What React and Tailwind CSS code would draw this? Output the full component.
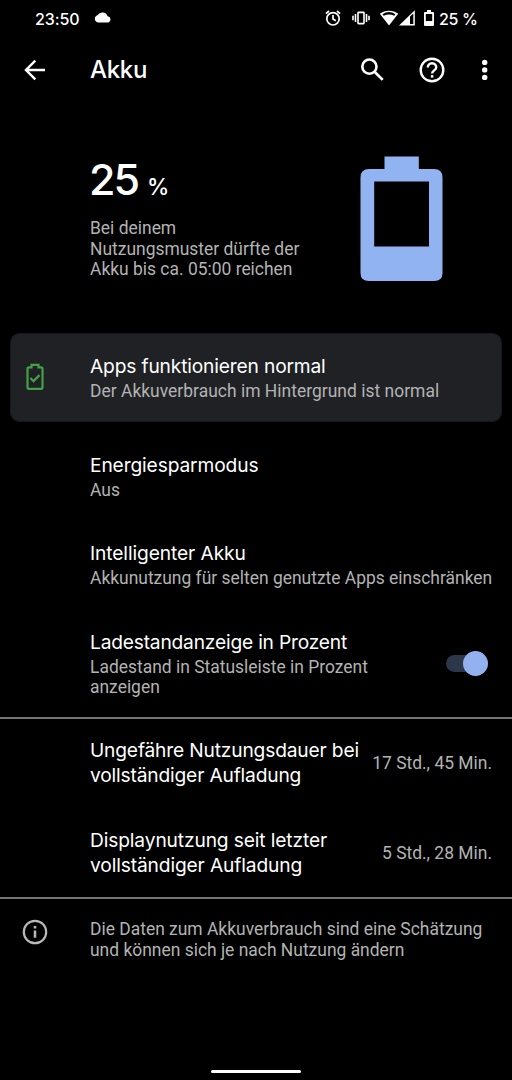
import React from "react";

const titleText = "font-['Inter',sans-serif] text-[19.2px] leading-[25px] text-white whitespace-nowrap";
const detailText = "text-[17.45px] leading-[20.5px] text-[#b3b3b3] whitespace-nowrap";

function StatusBar() {
  return (
    <header className="flex h-[37px] items-center pl-[35px] pr-[34px] font-['Inter',sans-serif] text-[16px] font-medium">
      <span className="w-[59px] whitespace-nowrap tracking-[-0.1px]">23:50</span>
      <svg className="mb-[2px] h-[11px] w-[18px]" viewBox="0 0 18 11" fill="currentColor">
        <path d="M4 10.4A3.7 3.7 0 0 1 3.5 3.2A5.6 5.6 0 0 1 13.6 4.2A3.2 3.2 0 0 1 14.4 10.4Z" />
      </svg>
      <div className="ml-auto flex items-center">
        <svg className="mb-px mr-[11px] h-4 w-4" viewBox="0 0 16 16" fill="none" stroke="currentColor" strokeWidth="1.7">
          <circle cx="8" cy="8.8" r="6.2" />
          <path d="M8 5v4l2.8 1.8M.9 3.7 4 1M15.1 3.7 12 1" />
        </svg>
        <svg className="mb-px mr-[9px] h-4 w-[18px]" viewBox="0 0 18 16" fill="none" stroke="currentColor" strokeWidth="1.6">
          <rect x="6" y="2.4" width="6" height="11.2" rx=".6" />
          <path d="M3.5 4v8M1 5.8v4.4M14.5 4v8M17 5.8v4.4" />
        </svg>
        <svg className="mb-px h-4 w-5" viewBox="0 0 20 16" fill="currentColor">
          <path d="M10 15.5.8 3.8C6-.3 14-.3 19.2 3.8Z" />
          <path d="M3.5 4.3Q10-.1 16.5 4.3L15.300 5.800Q10 3 4.700 5.800Z" fill="black" />
        </svg>
        <svg className="mb-px mr-[9px] h-4 w-4" viewBox="0 0 16 16">
          <path d="M0 15.5 15.8.2V15.5Z" fill="currentColor" />
          <path d="M11 6.600 14.300 3.400V14H11Z" fill="black" />
        </svg>
        <svg className="mb-px mr-[5px] h-4 w-[10px]" viewBox="0 0 10 16" fill="currentColor">
          <path fillRule="evenodd" d="M3 0h4v2h2q1 0 1 1v12q0 1-1 1H1q-1 0-1-1V3q0-1 1-1h2ZM1.8 4v7h6.4V4Z" />
        </svg>
        <span className="w-[39px] whitespace-nowrap tracking-[-0.3px]">25 %</span>
      </div>
    </header>
  );
}

function AppBar() {
  return (
    <div className="flex h-[66px] items-center pl-[23px] pr-[17px]">
      <svg className="h-6 w-6" viewBox="0 0 24 24" fill="none" stroke="currentColor" strokeWidth="2.4">
        <path d="M22 12H3.5M12.3 2.7 3 12l9.3 9.3" />
      </svg>
      <h1 className="ml-[43px] font-['Inter',sans-serif] text-[24px] font-medium leading-[30px] tracking-[-0.3px]">Akku</h1>
      <svg className="ml-auto mr-[35px] h-6 w-6" viewBox="0 0 24 24" fill="none" stroke="currentColor" strokeWidth="2.6">
        <circle cx="9.4" cy="8.6" r="7.1" />
        <path d="m14.3 13.5 8.400 8.400" />
      </svg>
      <svg className="mr-[29px] h-[26px] w-[26px]" viewBox="0 0 26 26" fill="none" stroke="currentColor" strokeWidth="2.4">
        <circle cx="13" cy="13" r="11.3" />
        <path d="M8.8 10.4a4.2 4.2 0 0 1 8.4 0c0 2.8-4.1 3.2-4.1 6" />
        <path d="M13.1 18.1v2.5" strokeWidth="2.5" />
      </svg>
      <svg className="-mr-[1px] h-[22px] w-[22px]" viewBox="0 0 22 22" fill="currentColor">
        <circle cx="10.700" cy="3.400" r="2.7" />
        <circle cx="10.700" cy="10.900" r="2.7" />
        <circle cx="10.700" cy="18.400" r="2.7" />
      </svg>
    </div>
  );
}

function Hero() {
  return (
    <section className="flex h-[230px] pl-[90px] pr-[69px]">
      <div className="pt-[50px]">
        <div className="-ml-px flex h-[52px] items-baseline font-['Inter',sans-serif] font-medium leading-[52px]">
          <span className="text-[43px] tracking-[-2px]">25</span>
          <span className="ml-[9px] text-[22.500px] leading-none">%</span>
        </div>
        <p className={"mt-[13px] " + detailText}>
          Bei deinem<br />Nutzungsmuster dürfte der<br />Akku bis ca. 05:00 reichen
        </p>
      </div>
      <svg className="ml-auto mt-[53px] h-[126px] w-[83px]" viewBox="0 0 83 126" fill="#92b3f2">
        <path fillRule="evenodd" d="M24.5.5h34.3V13H74q8.5 0 8.5 8.5V117q0 8-8.5 8H9q-8.5 0-8.5-8V21.500q0-8.500 8.500-8.500h15.500ZM14.200 25.500v65H69v-65Z" />
      </svg>
    </section>
  );
}

function Row({ title, detail, height, children }) {
  return (
    <div className={"flex " + height}>
      <div className="w-[285px] shrink-0">
        {title}
        <div className="pt-[2px]">{detail}</div>
      </div>
      {children}
    </div>
  );
}

export default function App() {
  return (
    <main className="flex h-[1080px] w-[512px] flex-col overflow-hidden bg-black font-['Roboto',sans-serif] text-white">
      <StatusBar />
      <AppBar />
      <Hero />

      <section className="mx-[10px] flex h-[88.500px] rounded-[10px] bg-[#202125] pt-[21px] ring-1 ring-[#17181a] ring-inset">
        <svg className="ml-[16px] mt-[9px] h-[28px] w-[18px]" viewBox="0 0 18 28" fill="none" stroke="#43a047" strokeWidth="2.200">
          <path d="M5.500 4.300V1.800h7V4.300H15q1.500 0 1.500 1.500v18.500q0 1.500-1.500 1.500H3q-1.500 0-1.500-1.500V5.800Q1.500 4.300 3 4.300Z" />
          <path d="m4.300 15 3.200 3.100 6-6" />
        </svg>
        <div className="ml-[46px]">
          <h2 className={titleText + " tracking-[-0.16px]"}>Apps funktionieren normal</h2>
          <p className={"mt-[2px] tracking-[0.02px] " + detailText}>Der Akkuverbrauch im Hintergrund ist normal</p>
        </div>
      </section>

      <section className="flex flex-col pl-[90px] pt-[31px]">
        <Row height="h-[88.500px]"
          title={<h2 className={titleText + " tracking-[-0.13px]"}>Energiesparmodus</h2>}
          detail={<p className={detailText}>Aus</p>} />
        <Row height="h-[88.500px]"
          title={<h2 className={titleText + " tracking-[-0.1px]"}>Intelligenter Akku</h2>}
          detail={<p className={detailText}>Akkunutzung für selten genutzte Apps einschränken</p>} />
        <Row height="h-[87.500px]"
          title={<h2 className={titleText + " tracking-[-0.2px]"}>Ladestandanzeige in Prozent</h2>}
          detail={<p className={detailText}>Ladestand in Statusleiste in Prozent<br />anzeigen</p>}>
          <button role="switch" aria-checked="true" aria-label="Ladestandanzeige in Prozent" className="ml-[71px] mt-[25px] flex h-[17px] w-[42px] items-center justify-end rounded-full bg-[#2d374b]">
            <span className="h-[25px] w-[25px] shrink-0 rounded-full bg-[#92b1ee]" />
          </button>
        </Row>
      </section>

      <section className="flex flex-col border-y-2 border-[#757575] pl-[90px] pr-[20px] pt-[19px]">
        <div className="flex h-[90px] justify-between">
          <h2 className={titleText + " tracking-[-0.17px]"}>Ungefähre Nutzungsdauer bei<br />vollständiger Aufladung</h2>
          <span className={"mt-[15px] " + detailText}>17 Std., 45 Min.</span>
        </div>
        <div className="flex h-[69px] justify-between">
          <h2 className={titleText + " tracking-[-0.13px]"}>Displaynutzung seit letzter<br />vollständiger Aufladung</h2>
          <span className={"mt-[15px] " + detailText}>5 Std., 28 Min.</span>
        </div>
      </section>

      <footer className="flex pl-[22px] pt-[20px]">
        <svg className="h-[26px] w-[26px]" viewBox="0 0 26 26" fill="none" stroke="#b9b9b9" strokeWidth="2.200">
          <circle cx="13" cy="13" r="11.200" />
          <path d="M13 11.500v7.300M13 7v2.500" strokeWidth="2.500" />
        </svg>
        <p className={"ml-[42px] " + detailText}>
          Die Daten zum Akkuverbrauch sind eine Schätzung<br />und können sich je nach Nutzung ändern
        </p>
      </footer>
      <div className="mb-[7px] ml-[211px] mt-auto h-[3px] w-[90px] rounded-full bg-white" />
    </main>
  );
}
